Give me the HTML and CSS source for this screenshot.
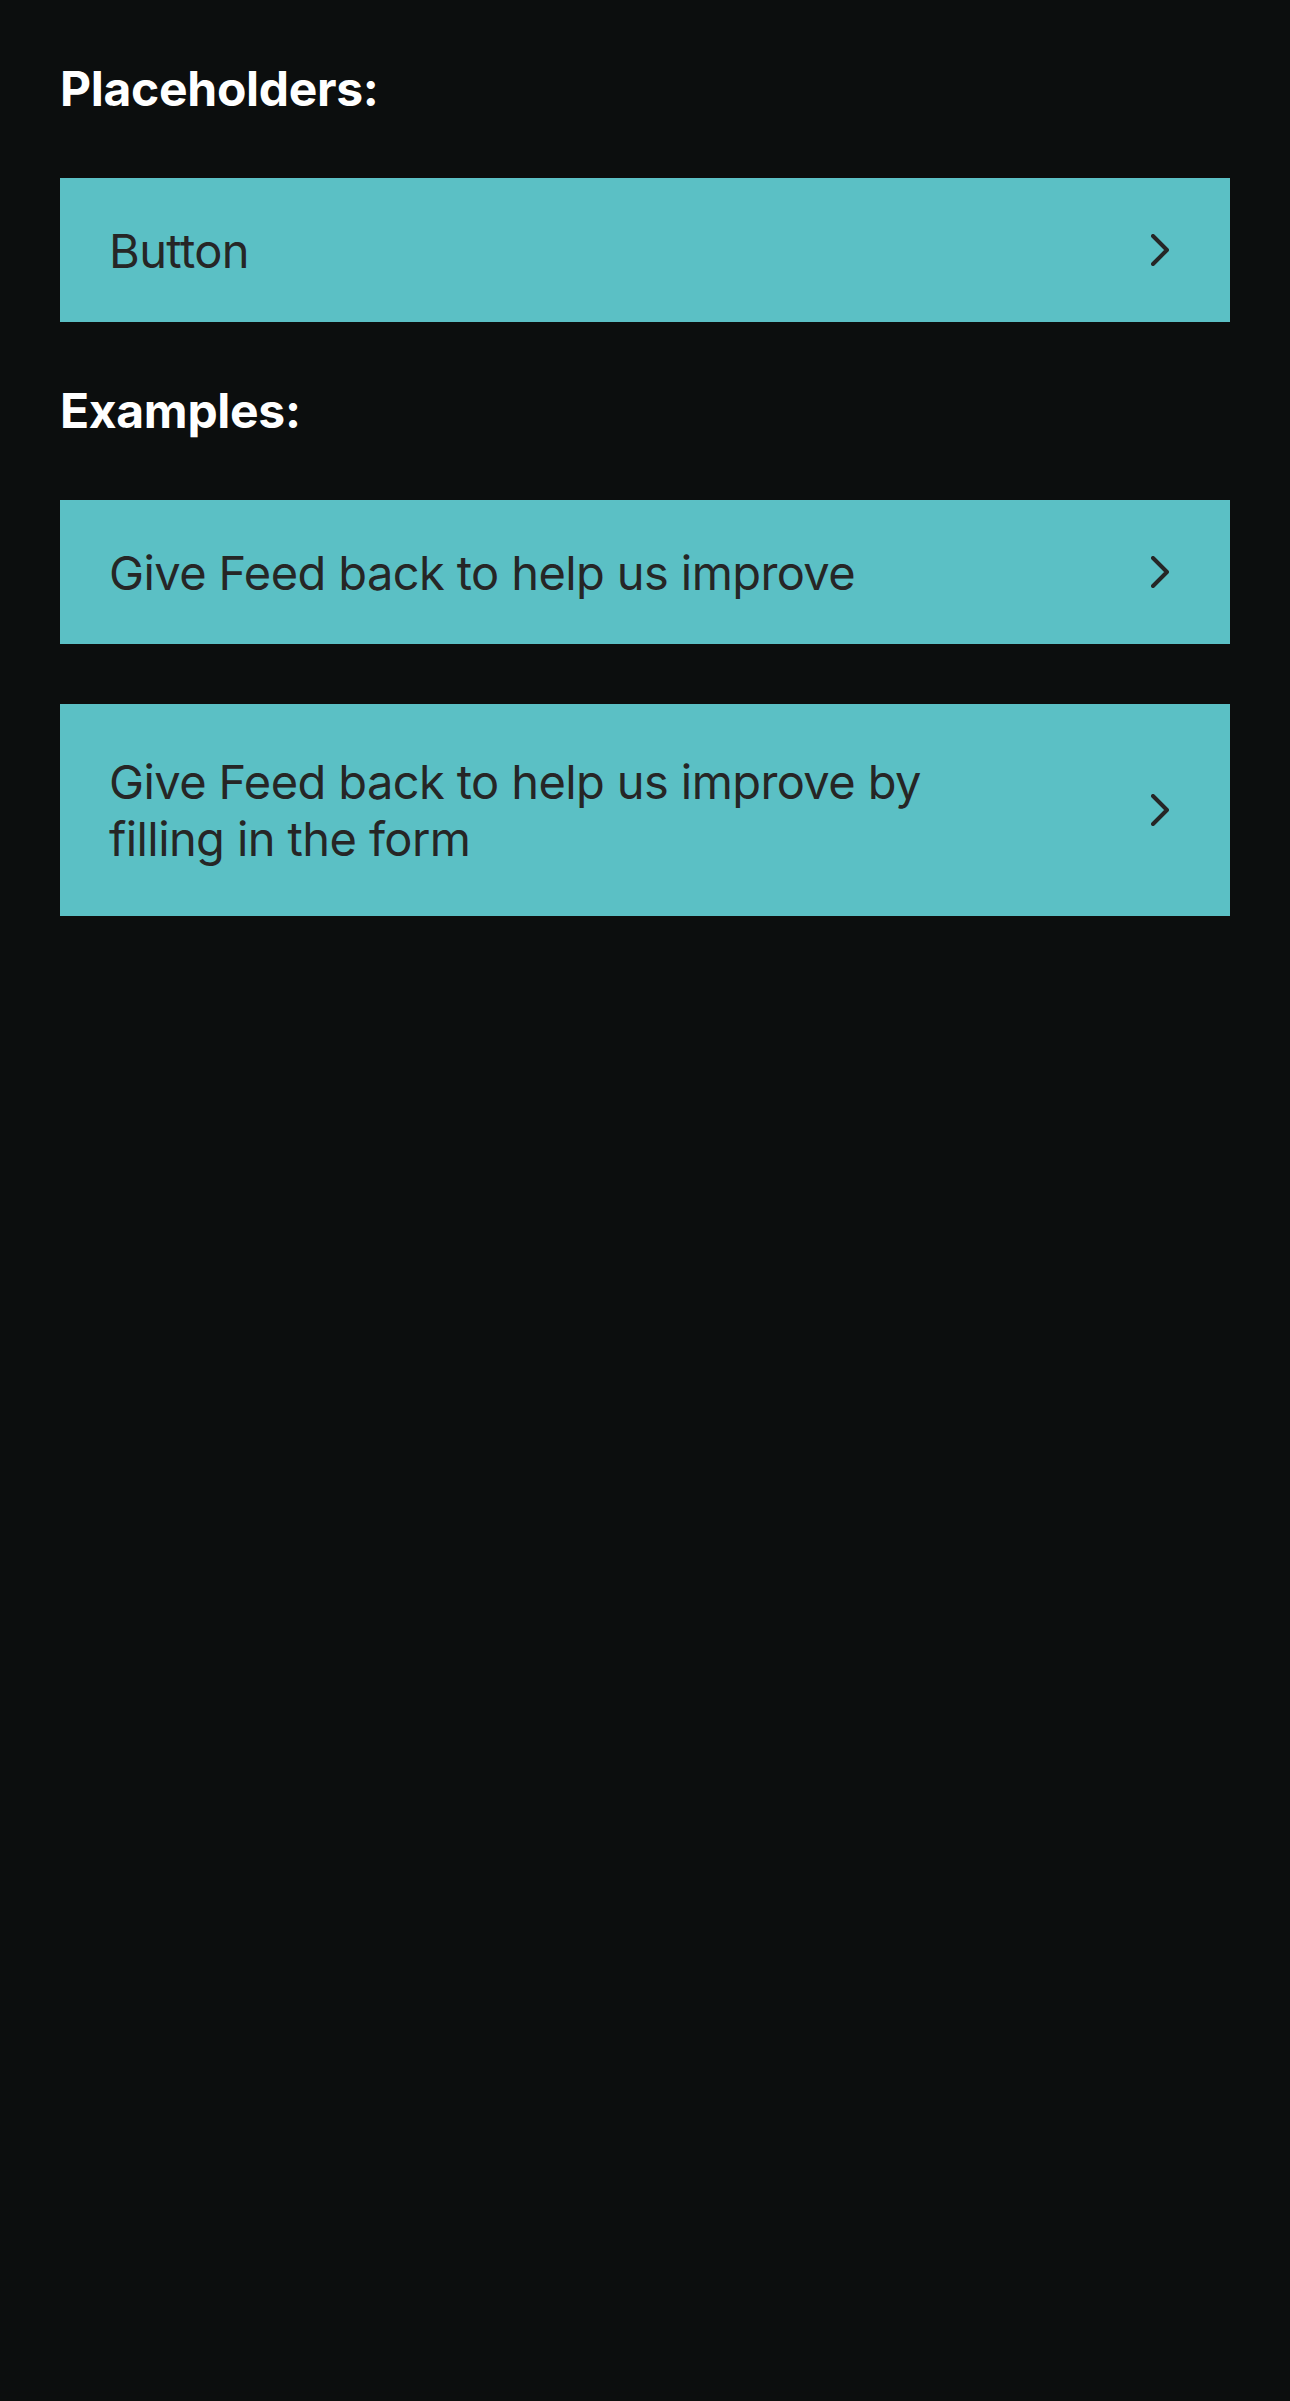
FILE: index.html
```html
<!DOCTYPE html>
<html lang="en">
<head>
<meta charset="utf-8">
<title>Buttons</title>
<link rel="stylesheet" href="styles.css">
</head>
<body>
<main class="page">
  <h2 class="section-title">Placeholders:</h2>
  <a class="row-btn" href="#">
    <span class="row-btn__label">Button</span>
    <svg class="row-btn__chevron" width="18" height="32" viewBox="0 0 18 32" aria-hidden="true"><polyline points="2,2 16,16 2,30" fill="none" stroke="#262626" stroke-width="4" stroke-linecap="round" stroke-linejoin="round"/></svg>
  </a>
  <h2 class="section-title">Examples:</h2>
  <a class="row-btn" href="#">
    <span class="row-btn__label">Give Feed back to help us improve</span>
    <svg class="row-btn__chevron" width="18" height="32" viewBox="0 0 18 32" aria-hidden="true"><polyline points="2,2 16,16 2,30" fill="none" stroke="#262626" stroke-width="4" stroke-linecap="round" stroke-linejoin="round"/></svg>
  </a>
  <a class="row-btn row-btn--tall" href="#">
    <span class="row-btn__label">Give Feed back to help us improve by filling in the form</span>
    <svg class="row-btn__chevron" width="18" height="32" viewBox="0 0 18 32" aria-hidden="true"><polyline points="2,2 16,16 2,30" fill="none" stroke="#262626" stroke-width="4" stroke-linecap="round" stroke-linejoin="round"/></svg>
  </a>
</main>
</body>
</html>
```
FILE: styles.css
```css
html, body {
  margin: 0;
  padding: 0;
  background: #0c0e0e;
}

body {
  min-height: 2401px;
  font-family: Inter, "Noto Sans", sans-serif;
}

.page {
  display: flex;
  flex-direction: column;
  gap: 60px;
  padding: 60px 60px 0;
}

.section-title {
  margin: 0;
  color: #ffffff;
  font-size: 48px;
  line-height: 58px;
  font-weight: 700;
  letter-spacing: -0.3px;
}

.row-btn {
  display: flex;
  align-items: center;
  justify-content: space-between;
  box-sizing: border-box;
  min-height: 144px;
  padding: 43px 61px 43px 49px;
  background: #5bc0c5;
  color: #262626;
  text-decoration: none;
}

.row-btn--tall {
  padding-top: 49px;
  padding-bottom: 49px;
}

.row-btn__label {
  flex: 0 1 850px;
  font-size: 47px;
  line-height: 57px;
  font-weight: 400;
  letter-spacing: -0.6px;
}

.row-btn__chevron {
  flex: none;
  display: block;
}
```
